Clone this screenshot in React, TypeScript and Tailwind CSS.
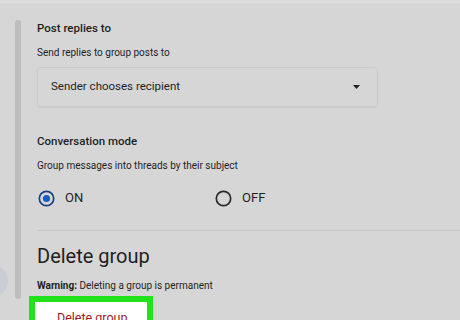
import React from "react";

function Radio({ checked }: { checked: boolean }) {
  return (
    <svg width="17" height="17" viewBox="0 0 17 17" className="shrink-0">
      <circle cx="8.5" cy="8.5" r="7.2" fill="none" stroke={checked ? "#1a3f86" : "#2a2a2a"} strokeWidth="1.7" />
      {checked && <circle cx="8.5" cy="8.5" r="3.6" fill="#1b5bc6" />}
    </svg>
  );
}

export default function App() {
  return (
    <div className="relative w-[460px] h-[320px] overflow-hidden bg-[#d6d6d6] text-[#1f1f1f] flex" style={{ fontFamily: "Roboto, 'Noto Sans', sans-serif" }}>
      <div className="absolute left-0 top-0 w-full h-[3px] bg-[#dcdcdc]" />
      <div className="absolute left-[-24px] top-[265px] w-[32px] h-[32px] rounded-full bg-[#c9cdd5]" />
      <div className="w-[15px] shrink-0" />
      <div className="w-[6px] shrink-0 mt-[20px] h-[279px] rounded-full bg-[#bdbdbd]" />
      <div className="flex-1 pl-[16px]">
        <div className="mt-[20px] text-[11.5px] leading-[16px] font-medium">Post replies to</div>
        <div className="mt-[10px] text-[10px] leading-[14px]">Send replies to group posts to</div>
        <div className="mt-[7px] w-[341px] h-[40px] rounded-[4px] border border-[#cbcbcb] shadow-[0_1px_2px_rgba(0,0,0,0.06)] flex items-center justify-between pl-[13px] pr-[17px]">
          <span className="text-[11.5px]">Sender chooses recipient</span>
          <svg width="7" height="4" viewBox="0 0 7 4"><path d="M0 0h7L3.5 4z" fill="#222" /></svg>
        </div>
        <div className="mt-[26px] text-[11.5px] leading-[16px] font-medium">Conversation mode</div>
        <div className="mt-[10px] text-[10px] leading-[14px]">Group messages into threads by their subject</div>
        <div className="mt-[15px] h-[20px] flex items-center">
          <div className="w-[178px] flex items-center gap-[10px] pl-[1px]">
            <Radio checked />
            <span className="text-[13px]">ON</span>
          </div>
          <div className="flex items-center gap-[10px]">
            <Radio checked={false} />
            <span className="text-[13px]">OFF</span>
          </div>
        </div>
        <div className="mt-[22px] h-px bg-[#c6c6c6]" />
        <div className="mt-[13px] text-[20px] leading-[24px]">Delete group</div>
        <div className="mt-[11px] text-[10px] leading-[14px]"><span className="font-bold">Warning:</span> Deleting a group is permanent</div>
        <div className="mt-[3px] ml-[-8px] w-[124px] h-[40px] border-[6px] border-[#22e21b] bg-white pl-[22px] pt-[8px] text-[12.5px] leading-[16px] text-[#a0171b]">Delete group</div>
      </div>
    </div>
  );
}
